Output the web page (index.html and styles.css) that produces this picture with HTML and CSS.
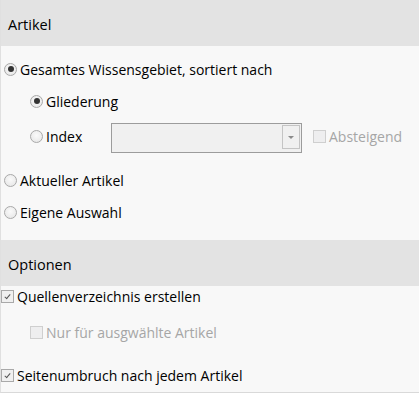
FILE: index.html
```html
<!DOCTYPE html>
<html lang="de">
<head>
  <meta charset="UTF-8">
  <title>Drucken</title>
  <link rel="stylesheet" href="styles.css">
</head>
<body>
  <div class="panel">
    <div class="group-title">Artikel</div>
    <div class="group-body">
      <label class="option"><span class="radio checked"></span>Gesamtes Wissensgebiet, sortiert nach</label>
      <label class="option sub"><span class="radio checked"></span>Gliederung</label>
      <div class="option sub row-index">
        <label class="index-label"><span class="radio"></span>Index</label>
        <div class="combo"><span class="combo-btn"></span></div>
        <label class="disabled check-label"><span class="check"></span>Absteigend</label>
      </div>
      <label class="option row-after"><span class="radio"></span>Aktueller Artikel</label>
      <label class="option"><span class="radio"></span>Eigene Auswahl</label>
    </div>
    <div class="group-title">Optionen</div>
    <div class="group-body options">
      <label class="option opt-1"><span class="check checked"></span>Quellenverzeichnis erstellen</label>
      <label class="option sub disabled opt-2"><span class="check"></span>Nur für ausgwählte Artikel</label>
      <label class="option opt-3"><span class="check checked"></span>Seitenumbruch nach jedem Artikel</label>
    </div>
  </div>
</body>
</html>
```

FILE: styles.css
```css
/* Global Styles */
body {
  margin: 0;
  background: #f8f8f8;
  font-family: 'Open Sans', 'Noto Sans', sans-serif;
  font-size: 14px;
  color: #000;
}
.panel {
  width: 419px;
  height: 393px;
  border-left: 1px solid #e0e0e0;
  border-bottom: 1px solid #d9d9d9;
  box-sizing: border-box;
  background: #f8f8f8;
}
.group-title {
  background: #e3e3e3;
  height: 42px;
  line-height: 42px;
  padding: 4px 0 0 7px;
  font-size: 14.5px;
}
.group-body {
  display: flex;
  flex-direction: column;
  padding: 7px 0 12px;
}
.option {
  display: flex;
  align-items: center;
  height: 32px;
  padding-left: 3px;
  white-space: nowrap;
}
.option.sub {
  padding-left: 29px;
}
.row-index {
  height: 38px;
}
.row-after {
  margin-top: 9px;
}
.index-label {
  display: flex;
  align-items: center;
  width: 81px;
}
.radio {
  width: 11px;
  height: 11px;
  border: 1px solid #a9a9a9;
  border-radius: 50%;
  background: radial-gradient(circle at 50% 40%, #fafafa, #e4e4e4);
  margin-right: 3px;
  position: relative;
  flex: none;
}
.radio.checked::after {
  content: "";
  position: absolute;
  left: 2.5px;
  top: 2.5px;
  width: 6px;
  height: 6px;
  border-radius: 50%;
  background: #333;
}
.combo {
  width: 187px;
  height: 26px;
  margin-top: 4px;
  border: 1px solid #9c9c9c;
  background: #f0f0f0;
  display: flex;
  justify-content: flex-end;
  padding: 1px;
}
.combo-btn {
  width: 16px;
  height: 22px;
  border: 1px solid #c4c4c4;
  position: relative;
}
.combo-btn::after {
  content: "";
  position: absolute;
  left: 5px;
  top: 10px;
  border-left: 3px solid transparent;
  border-right: 3px solid transparent;
  border-top: 3px solid #8a8a8a;
}
.check-label {
  display: flex;
  align-items: center;
  margin-left: 11px;
}
.check {
  width: 11px;
  height: 11px;
  border: 1px solid #a9a9a9;
  background: #f0f0f0;
  margin-right: 3px;
  position: relative;
  flex: none;
}
.check.checked::after {
  content: "";
  position: absolute;
  left: 4px;
  top: 2px;
  width: 2px;
  height: 5px;
  border-right: 1.5px solid #555;
  border-bottom: 1.5px solid #555;
  transform: rotate(40deg);
}
.disabled {
  color: #a6a6a6;
}
.disabled .check {
  border-color: #cfcfcf;
  background: #eeeeef;
}
.options {
  padding: 0;
}
.options .option {
  padding-left: 0;
}
.options .option.sub {
  padding-left: 29px;
}
.opt-1 {
  height: 20px;
}
.opt-2 {
  height: 52px;
}
.opt-3 {
  height: 34px;
}
```
